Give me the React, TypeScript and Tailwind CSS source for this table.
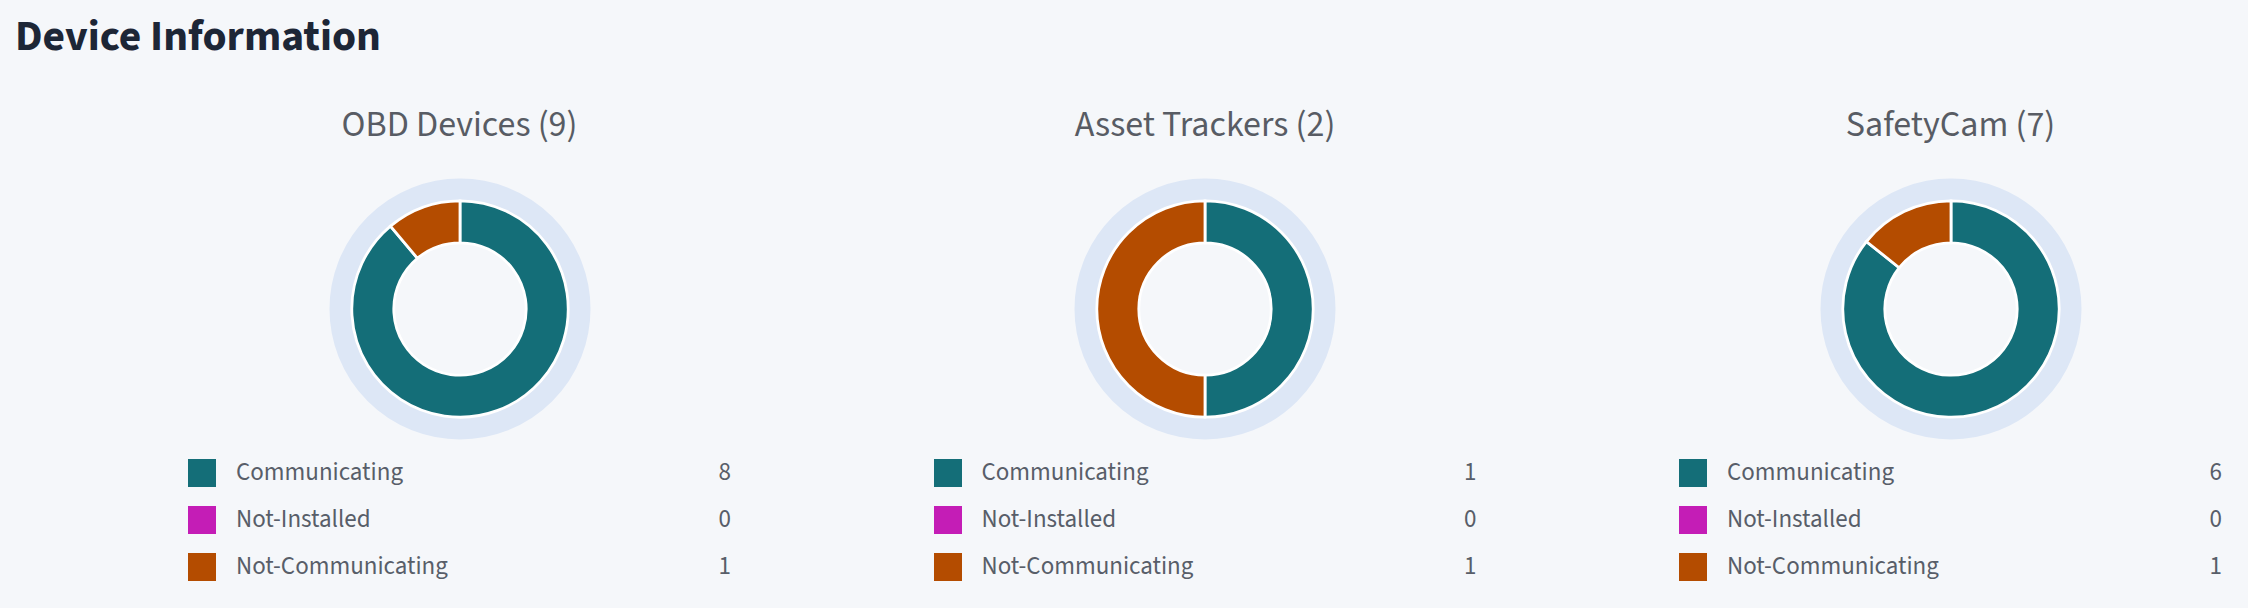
import React from "react";

type Seg = { label: string; value: number; color: string; sq: string };

const FONT = { fontFamily: '"Source Sans Pro", "Source Sans 3", Lato, "Noto Sans", sans-serif' };

function polar(cx: number, cy: number, r: number, a: number) {
  const rad = ((a - 90) * Math.PI) / 180;
  return [cx + r * Math.cos(rad), cy + r * Math.sin(rad)];
}

function arcPath(cx: number, cy: number, R: number, r: number, a0: number, a1: number) {
  const large = a1 - a0 > 180 ? 1 : 0;
  const [x0, y0] = polar(cx, cy, R, a0);
  const [x1, y1] = polar(cx, cy, R, a1);
  const [x2, y2] = polar(cx, cy, r, a1);
  const [x3, y3] = polar(cx, cy, r, a0);
  return `M${x0} ${y0} A${R} ${R} 0 ${large} 1 ${x1} ${y1} L${x2} ${y2} A${r} ${r} 0 ${large} 0 ${x3} ${y3} Z`;
}

function Donut({ segs }: { segs: Seg[] }) {
  const total = segs.reduce((s, x) => s + x.value, 0);
  const c = 131;
  let a = 0;
  const parts = segs
    .filter((s) => s.value > 0)
    .map((s) => {
      const sweep = (s.value / total) * 360;
      const a0 = a;
      const a1 = a + sweep;
      a = a1;
      return { ...s, a0, a1, sweep };
    });
  return (
    <svg width="262" height="262" viewBox="0 0 262 262">
      <circle cx={c} cy={c} r={119.5} fill="none" stroke="#dde7f6" strokeWidth={22} />
      {parts.map((p) =>
        p.sweep >= 359.99 ? (
          <g key={p.label}>
            <circle cx={c} cy={c} r={87.2} fill="none" stroke={p.color} strokeWidth={42} />
            <circle cx={c} cy={c} r={108.2} fill="none" stroke="#fff" strokeWidth={2.8} />
            <circle cx={c} cy={c} r={66.2} fill="none" stroke="#fff" strokeWidth={2.8} />
          </g>
        ) : (
          <path
            key={p.label}
            d={arcPath(c, c, 108.2, 66.2, p.a0, p.a1)}
            fill={p.color}
            stroke="#ffffff"
            strokeWidth={2.8}
            strokeLinejoin="miter"
          />
        )
      )}
    </svg>
  );
}

function Chart({ title, segs }: { title: string; segs: Seg[] }) {
  return (
    <div className="w-[543px] flex flex-col items-center">
      <div className="text-[36px] leading-[40px] text-[#585c64] mt-[43px] whitespace-nowrap">{title}</div>
      <div className="mt-[32.5px]">
        <Donut segs={segs} />
      </div>
      <div className="mt-[10px] w-full flex flex-col">
        {segs.map((s) => (
          <div key={s.label} className="h-[47px] flex items-center">
            <div className={`w-[28px] h-[28px] ${s.sq}`} />
            <div className="ml-[20px] text-[25px] text-[#585e69] flex-1">{s.label}</div>
            <div className="text-[25px] text-[#585e69]">{s.value}</div>
          </div>
        ))}
      </div>
    </div>
  );
}

const TEAL = "#146e78";
const MAG = "#c41db6";
const ORG = "#b44c00";

function mk(a: number, b: number, c: number): Seg[] {
  return [
    { label: "Communicating", value: a, color: TEAL, sq: "bg-[#146e78]" },
    { label: "Not-Installed", value: b, color: MAG, sq: "bg-[#c41db6]" },
    { label: "Not-Communicating", value: c, color: ORG, sq: "bg-[#b44c00]" },
  ];
}

export default function App() {
  return (
    <div className="w-full h-[608px] bg-[#f5f7fa] overflow-hidden" style={FONT}>
      <h1 className="pt-[10px] pl-[15px] text-[43.5px] leading-[52px] font-bold text-[#1d2636]">Device Information</h1>
      <div className="flex pl-[188px] gap-[202.5px]">
        <Chart title="OBD Devices (9)" segs={mk(8, 0, 1)} />
        <Chart title="Asset Trackers (2)" segs={mk(1, 0, 1)} />
        <Chart title="SafetyCam (7)" segs={mk(6, 0, 1)} />
      </div>
    </div>
  );
}
